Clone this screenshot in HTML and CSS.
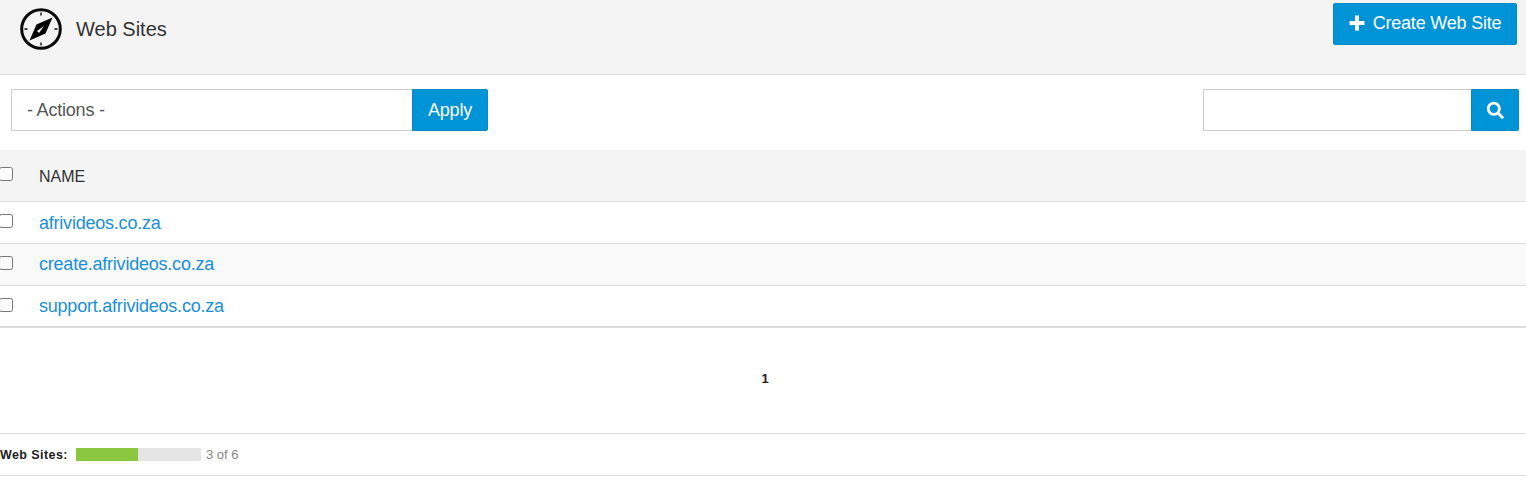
FILE: index.html
```html
<!DOCTYPE html>
<html lang="en">
<head>
<meta charset="utf-8">
<title>Web Sites</title>
<link rel="stylesheet" href="styles.css">
</head>
<body>
<header class="page-head">
  <div class="title">
    <svg class="compass" width="44" height="44" viewBox="0 0 44 44" aria-hidden="true">
      <circle cx="22" cy="22" r="19.300" fill="none" stroke="#0a0a0a" stroke-width="3"/>
      <path d="M22 5.500v3M22 35.500v3M5.500 22h3M35.500 22h3" stroke="#444" stroke-width="1.800"/>
      <path fill-rule="evenodd" fill="#000" d="M33.500 10.500 L26.500 26.500 L10.500 33.500 L17.500 17.500 Z M25 19 L18 24 L20 26 Z"/>
    </svg>
    <h1>Web Sites</h1>
  </div>
  <a class="btn btn-create" href="#">
    <svg class="plus" width="16" height="16" viewBox="0 0 16 16" aria-hidden="true"><path d="M6 0.500h4v5.500h5.500v4H10v5.500H6V10H0.500V6H6z" fill="#fff"/></svg>
    <span>Create Web Site</span>
  </a>
</header>
<section class="toolbar">
  <div class="group">
    <div class="select">- Actions -</div>
    <button class="btn btn-apply" type="button">Apply</button>
  </div>
  <div class="group">
    <input class="search" type="text" aria-label="Search">
    <button class="btn btn-search" type="button" aria-label="Search">
      <svg width="18" height="18" viewBox="0 0 18 18" aria-hidden="true"><circle cx="7.800" cy="7.800" r="5.600" fill="none" stroke="#fff" stroke-width="2.800"/><path d="M12 12L16.200 16.200" stroke="#fff" stroke-width="3" stroke-linecap="round"/></svg>
    </button>
  </div>
</section>
<section class="table">
  <div class="row row-head"><input class="check" type="checkbox" aria-label="Select all"><span class="name-head">NAME</span></div>
  <div class="row"><input class="check" type="checkbox" aria-label="Select"><a class="link" href="#">afrivideos.co.za</a></div>
  <div class="row row-alt"><input class="check" type="checkbox" aria-label="Select"><a class="link link-down" href="#">create.afrivideos.co.za</a></div>
  <div class="row row-last"><input class="check" type="checkbox" aria-label="Select"><a class="link link-down" href="#">support.afrivideos.co.za</a></div>
</section>
<nav class="pager"><b>1</b></nav>
<footer class="quota">
  <b class="quota-label">Web Sites:</b>
  <div class="bar"><div class="bar-fill"></div></div>
  <span class="quota-count">3 of 6</span>
</footer>
</body>
</html>
```
FILE: styles.css
```css
* { box-sizing: border-box; }
html, body { margin: 0; padding: 0; }
body {
  background: #fff;
  color: #333;
  font-family: "Liberation Sans", Arial, sans-serif;
  font-size: 16px;
  overflow: hidden;
}
.page-head {
  height: 75px;
  background: #f4f4f4;
  border-bottom: 1px solid #ddd;
  display: flex;
  justify-content: space-between;
  align-items: flex-start;
  padding: 3px 9px 0 19px;
}
.title { display: flex; align-items: center; gap: 13px; height: 52px; }
.compass { display: block; }
.title h1 { margin: 0; font-size: 20px; font-weight: 400; color: #333; }
.btn {
  background: #0094d6;
  color: #fff;
  border: 1px solid #0a88c4;
  font-family: inherit;
  font-size: 18px;
  display: flex;
  align-items: center;
  justify-content: center;
  text-decoration: none;
  padding: 0;
}
.btn-create { width: 184px; height: 42px; border-radius: 2px; gap: 8px; padding-bottom: 2px; letter-spacing: -0.2px; }
.toolbar {
  display: flex;
  justify-content: space-between;
  padding: 14px 7px 0 11px;
  height: 75px;
}
.group { display: flex; height: 42px; }
.select {
  width: 401px;
  height: 42px;
  border: 1px solid #ccc;
  border-right: 0;
  border-radius: 2px 0 0 2px;
  padding: 0 15px;
  line-height: 40px;
  font-size: 18px;
  color: #555;
  letter-spacing: -0.2px;
}
.btn-apply { width: 76px; height: 42px; border-radius: 0 2px 2px 0; letter-spacing: -0.2px; }
.search {
  width: 268px;
  height: 42px;
  border: 1px solid #ccc;
  border-right: 0;
  background: #fff;
  padding: 0 12px;
  border-radius: 0;
  outline: 0;
}
.btn-search { width: 48px; height: 42px; border-radius: 0 2px 2px 0; }
.table { display: flex; flex-direction: column; }
.row {
  display: flex;
  align-items: center;
  height: 42px;
  border-bottom: 1px solid #ddd;
}
.row-head { height: 52px; background: #f4f4f4; }
.row-alt { background: #f9f9f9; }
.row-last { height: 42px; border-bottom: 2px solid #ddd; }
.check { width: 14px; height: 14px; margin: -3px 26px 0 -1px; flex: none; }
.name-head { font-size: 16px; color: #333; padding-top: 2px; }
.link { color: #1b8fd6; font-size: 18px; text-decoration: none; letter-spacing: -0.22px; padding-top: 2px; }
.link-down { padding-top: 0; }
.pager {
  height: 105px;
  display: flex;
  align-items: center;
  justify-content: center;
  font-size: 13px;
  color: #222;
  padding: 0 0 4px 4px;
}
.quota {
  height: 43px;
  border-top: 1px solid #ddd;
  border-bottom: 1px solid #ddd;
  display: flex;
  align-items: center;
  font-size: 13px;
}
.quota-label { color: #222; width: 76px; flex: none; letter-spacing: 0.42px; font-size: 12.500px; }
.bar { width: 125px; height: 13px; background: #e4e4e4; flex: none; }
.bar-fill { width: 62px; height: 100%; background: #8ac63f; }
.quota-count { color: #888; margin-left: 5px; }
```
